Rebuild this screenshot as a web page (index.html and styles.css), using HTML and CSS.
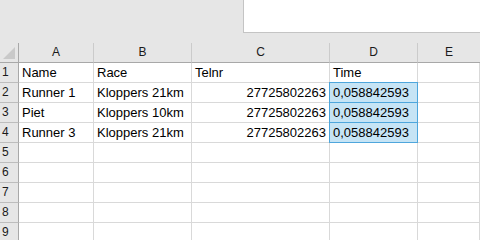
FILE: index.html
```html
<!DOCTYPE html>
<html>
<head>
<meta charset="utf-8">
<link rel="stylesheet" href="styles.css">
</head>
<body>
<div class="top">
  <div class="namebox"></div>
</div>
<div class="sheet">
  <div class="corner"><span class="tri"></span></div>
  <div class="colh">A</div>
  <div class="colh">B</div>
  <div class="colh">C</div>
  <div class="colh">D</div>
  <div class="colh last">E</div>

  <div class="rowh">1</div>
  <div class="cell">Name</div>
  <div class="cell">Race</div>
  <div class="cell">Telnr</div>
  <div class="cell">Time</div>
  <div class="cell"></div>

  <div class="rowh">2</div>
  <div class="cell">Runner 1</div>
  <div class="cell">Kloppers 21km</div>
  <div class="cell num">27725802263</div>
  <div class="cell sel">0,058842593</div>
  <div class="cell"></div>

  <div class="rowh">3</div>
  <div class="cell">Piet</div>
  <div class="cell">Kloppers 10km</div>
  <div class="cell num">27725802263</div>
  <div class="cell sel">0,058842593</div>
  <div class="cell"></div>

  <div class="rowh">4</div>
  <div class="cell">Runner 3</div>
  <div class="cell">Kloppers 21km</div>
  <div class="cell num">27725802263</div>
  <div class="cell sel">0,058842593</div>
  <div class="cell"></div>

  <div class="rowh">5</div>
  <div class="cell"></div><div class="cell"></div><div class="cell"></div><div class="cell"></div><div class="cell"></div>
  <div class="rowh">6</div>
  <div class="cell"></div><div class="cell"></div><div class="cell"></div><div class="cell"></div><div class="cell"></div>
  <div class="rowh">7</div>
  <div class="cell"></div><div class="cell"></div><div class="cell"></div><div class="cell"></div><div class="cell"></div>
  <div class="rowh">8</div>
  <div class="cell"></div><div class="cell"></div><div class="cell"></div><div class="cell"></div><div class="cell"></div>
  <div class="rowh">9</div>
  <div class="cell"></div><div class="cell"></div><div class="cell"></div><div class="cell"></div><div class="cell"></div>
</div>
</body>
</html>
```

FILE: styles.css
```css
html, body {
  margin: 0;
  padding: 0;
  background: #e6e6e6;
  overflow: hidden;
}
body {
  width: 480px;
  height: 240px;
  font-family: "Liberation Sans", Arial, sans-serif;
}
.top {
  height: 43px;
  padding-left: 243px;
  box-sizing: border-box;
}
.namebox {
  height: 33px;
  box-sizing: border-box;
  background: #ffffff;
  border-left: 1px solid #c4c4c4;
  border-bottom: 1px solid #c4c4c4;
}
.sheet {
  display: grid;
  grid-template-columns: 19px 75px 98px 138px 88px 1fr;
  grid-auto-rows: 20px;
  background: #ffffff;
}
.sheet > div {
  box-sizing: border-box;
  white-space: nowrap;
  overflow: hidden;
}
.corner {
  background: #e6e6e6;
  border-right: 1px solid #a8a8a8;
  border-bottom: 1px solid #a8a8a8;
  padding: 4px 0 0 3px;
}
.tri {
  display: block;
  width: 12px;
  height: 12px;
  background: #c9c9c9;
  clip-path: polygon(100% 0, 100% 100%, 0 100%);
}
.colh {
  background: #e6e6e6;
  border-right: 1px solid #cbcbcb;
  border-bottom: 1px solid #a8a8a8;
  text-align: center;
  font-size: 12px;
  line-height: 19px;
  color: #1a1a1a;
}
.colh.last {
  border-right: none;
}
.rowh {
  background: #e6e6e6;
  border-right: 1px solid #a8a8a8;
  border-bottom: 1px solid #bdbdbd;
  font-size: 12px;
  line-height: 19px;
  padding-left: 2px;
  color: #1a1a1a;
}
.cell {
  border-right: 1px solid #d9d9d9;
  border-bottom: 1px solid #d9d9d9;
  font-size: 13px;
  line-height: 19px;
  padding: 0 3px;
  color: #000000;
}
.cell.num {
  text-align: right;
}
.cell.sel {
  background: #c6e4f5;
  border-right-color: #4ea6dc;
  border-bottom-color: #4ea6dc;
  box-shadow: -1px 0 0 #4ea6dc, 0 -1px 0 #4ea6dc, -1px -1px 0 #4ea6dc;
  overflow: visible;
}
```
